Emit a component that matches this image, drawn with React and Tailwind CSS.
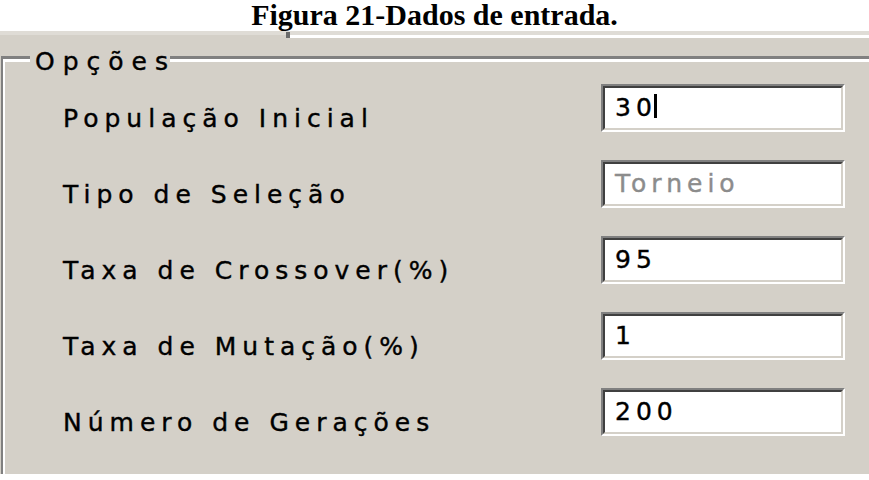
const rows = [
  { label: 'População Inicial', value: '30', caret: true },
  { label: 'Tipo de Seleção', value: 'Torneio', disabled: true },
  { label: 'Taxa de Crossover(%)', value: '95' },
  { label: 'Taxa de Mutação(%)', value: '1' },
  { label: 'Número de Gerações', value: '200' },
];

// sunken win32 edit box, drawn at 2x
function EditBox({ value, caret, disabled }) {
  return (
    <div className="w-[244px] h-[48px] border-2 border-t-[#808080] border-l-[#808080] border-b-white border-r-white">
      <div className="h-full border-2 border-t-[#404040] border-l-[#404040] border-b-[#d4d0c8] border-r-[#d4d0c8] bg-white pl-[10px] pt-[7px]">
        <div
          className={`flex items-start text-[25px] leading-[25px] tracking-[5px] whitespace-nowrap [-webkit-text-stroke:0.4px] ${
            disabled ? 'text-[#8c8c8c]' : 'text-black'
          }`}
        >
          <span>{value}</span>
          {caret && <span className="inline-block w-[3px] h-[24px] bg-black ml-[-3px] mt-[-1px]" />}
        </div>
      </div>
    </div>
  );
}

export default function App() {
  return (
    <div
      className="w-[869px] h-[480px] bg-white overflow-hidden flex flex-col"
      style={{ fontFamily: '"DejaVu Sans", "Liberation Sans", sans-serif' }}
    >
      <div className="h-[31px] shrink-0 flex justify-center">
        <p className="font-bold text-[30px] leading-[29px] text-black whitespace-nowrap" style={{ fontFamily: '"Liberation Serif", "Times New Roman", serif' }}>
          Figura 21-Dados de entrada.
        </p>
      </div>

      {/* window frame edge */}
      <div className="h-[4px] shrink-0 bg-[#dfdcd6]" />
      <div className="h-[3px] shrink-0 flex bg-[#d4d0c8]">
        <div className="w-[286px]" />
        <div className="w-[4px] h-[6px] -mt-[3px] bg-[#6b6b6b]" />
        <div className="flex-1 bg-white" />
      </div>

      <div className="h-[436px] shrink-0 bg-[#d4d0c8] pt-[18px] pl-px">
        {/* group box "Opções" */}
        <div className="relative h-full border-t-[3px] border-l-2 border-[#808080]">
          <div className="h-full border-t-[3px] border-l-2 border-white">
            <span className="absolute left-[27px] top-[-10px] pl-[5px] pr-[2px] bg-[#d4d0c8] text-[25px] leading-[25px] tracking-[8px] text-black whitespace-nowrap [-webkit-text-stroke:0.4px]">
              Opçõe<span className="tracking-normal">s</span>
            </span>

            <div className="flex flex-col gap-[28px] pt-[22px]">
              {rows.map((row) => (
                <div key={row.label} className="flex items-start">
                  <div className="w-[596px] pl-[58px] pt-[22px] text-[25px] leading-[25px] tracking-[6px] text-black whitespace-nowrap [-webkit-text-stroke:0.4px]">
                    {row.label}
                  </div>
                  <EditBox value={row.value} caret={row.caret} disabled={row.disabled} />
                </div>
              ))}
            </div>
          </div>
        </div>
      </div>

      <div className="flex-1 bg-white" />
    </div>
  );
}
